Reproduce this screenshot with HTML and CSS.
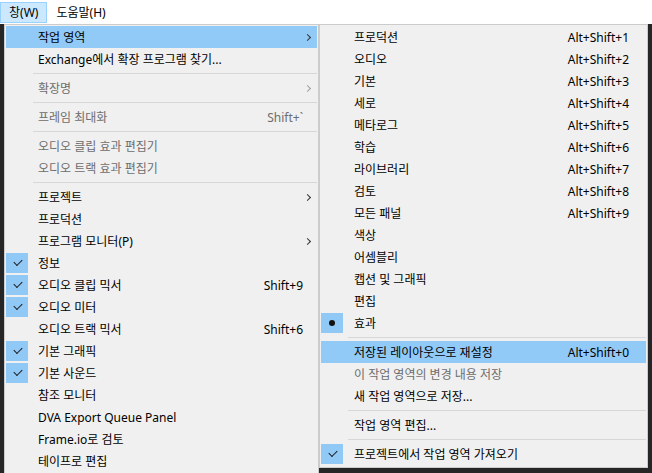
FILE: index.html
```html
<!DOCTYPE html>
<html lang="ko">
  <head>
    <meta charset="UTF-8" />
    <meta name="viewport" content="width=device-width, initial-scale=1.0" />
    <title>창 메뉴</title>
    <link rel="stylesheet" href="styles.css">
  </head>
  <body>
    <div class="menubar">
      <span class="barItem open">창(W)</span>
      <span class="barItem">도움말(H)</span>
    </div>

    <div class="menus">
      <ul class="menu main">
        <li class="item hot"><span class="label">작업 영역</span><span class="arrow"></span></li>
        <li class="item"><span class="label">Exchange에서 확장 프로그램 찾기...</span></li>
        <li class="sep"></li>
        <li class="item off"><span class="label">확장명</span><span class="arrow"></span></li>
        <li class="sep"></li>
        <li class="item off"><span class="label">프레임 최대화</span><span class="key">Shift+`</span></li>
        <li class="sep"></li>
        <li class="item off"><span class="label">오디오 클립 효과 편집기</span></li>
        <li class="item off"><span class="label">오디오 트랙 효과 편집기</span></li>
        <li class="sep"></li>
        <li class="item"><span class="label">프로젝트</span><span class="arrow"></span></li>
        <li class="item"><span class="label">프로덕션</span></li>
        <li class="item"><span class="label">프로그램 모니터(P)</span><span class="arrow"></span></li>
        <li class="item checked"><span class="label">정보</span></li>
        <li class="item checked"><span class="label">오디오 클립 믹서</span><span class="key">Shift+9</span></li>
        <li class="item checked"><span class="label">오디오 미터</span></li>
        <li class="item"><span class="label">오디오 트랙 믹서</span><span class="key">Shift+6</span></li>
        <li class="item checked"><span class="label">기본 그래픽</span></li>
        <li class="item checked"><span class="label">기본 사운드</span></li>
        <li class="item"><span class="label">참조 모니터</span></li>
        <li class="item"><span class="label">DVA Export Queue Panel</span></li>
        <li class="item"><span class="label">Frame.io로 검토</span></li>
        <li class="item"><span class="label">테이프로 편집</span></li>
      </ul>

      <ul class="menu sub">
        <li class="item"><span class="label">프로덕션</span><span class="key">Alt+Shift+1</span></li>
        <li class="item"><span class="label">오디오</span><span class="key">Alt+Shift+2</span></li>
        <li class="item"><span class="label">기본</span><span class="key">Alt+Shift+3</span></li>
        <li class="item"><span class="label">세로</span><span class="key">Alt+Shift+4</span></li>
        <li class="item"><span class="label">메타로그</span><span class="key">Alt+Shift+5</span></li>
        <li class="item"><span class="label">학습</span><span class="key">Alt+Shift+6</span></li>
        <li class="item"><span class="label">라이브러리</span><span class="key">Alt+Shift+7</span></li>
        <li class="item"><span class="label">검토</span><span class="key">Alt+Shift+8</span></li>
        <li class="item"><span class="label">모든 패널</span><span class="key">Alt+Shift+9</span></li>
        <li class="item"><span class="label">색상</span></li>
        <li class="item"><span class="label">어셈블리</span></li>
        <li class="item"><span class="label">캡션 및 그래픽</span></li>
        <li class="item"><span class="label">편집</span></li>
        <li class="item radio"><span class="label">효과</span></li>
        <li class="sep"></li>
        <li class="item hot"><span class="label">저장된 레이아웃으로 재설정</span><span class="key">Alt+Shift+0</span></li>
        <li class="item off"><span class="label">이 작업 영역의 변경 내용 저장</span></li>
        <li class="item"><span class="label">새 작업 영역으로 저장...</span></li>
        <li class="sep"></li>
        <li class="item"><span class="label">작업 영역 편집...</span></li>
        <li class="sep"></li>
        <li class="item checked"><span class="label">프로젝트에서 작업 영역 가져오기</span></li>
      </ul>
    </div>
  </body>
</html>
```

FILE: styles.css
```css
* {
  margin: 0;
  padding: 0;
  box-sizing: border-box;
}
body {
  background-color: #262626;
  font-family: "Segoe UI", "Noto Sans", "Noto Sans CJK KR", sans-serif;
  font-size: 12px;
  color: #000;
  overflow: hidden;
  width: 652px;
  height: 473px;
}
.menubar {
  background-color: #fff;
  height: 24px;
  display: flex;
  align-items: flex-start;
  padding-top: 2px;
}
.barItem {
  height: 21px;
  line-height: 20px;
  padding: 0 8px 0 8px;
  border: 1px solid transparent;
}
.barItem.open {
  background-color: #cce8ff;
  border-color: #99d1ff;
}
.menus {
  display: flex;
  align-items: flex-start;
  padding-left: 4px;
  height: 449px;
  overflow: hidden;
}
.menu {
  list-style: none;
  background-color: #f0f0f0;
  border: 1px solid #cccccc;
  padding: 1px 1px 2px 1px;
}
.main {
  width: 315px;
  height: 449px;
  border-bottom: none;
  padding-bottom: 0;
  overflow: hidden;
}
.sub {
  width: 329px;
}
.item {
  height: 22px;
  line-height: 22px;
  display: flex;
  align-items: center;
  position: relative;
  white-space: nowrap;
}
.main .item {
  padding: 0 0 0 32px;
}
.sub .item {
  padding: 0 0 0 33px;
}
.label,
.key {
  position: relative;
  top: 1px;
}
.label {
  flex: 1;
}
.key {
  text-align: right;
}
.main .key {
  margin-right: 14px;
}
.sub .key {
  margin-right: 17px;
}
.item.hot {
  background-color: #91c9f7;
}
.item.off {
  color: #6d6d6d;
}
.arrow {
  width: 14px;
  height: 22px;
  position: relative;
}
.arrow::after {
  content: "";
  position: absolute;
  left: 2px;
  top: 9px;
  width: 4px;
  height: 4px;
  border-top: 1px solid #333;
  border-right: 1px solid #333;
  transform: rotate(45deg);
}
.off .arrow::after {
  border-color: #a0a0a0;
}
.checked::before,
.radio::before {
  content: "";
  position: absolute;
  left: 0;
  top: 1px;
  width: 22px;
  height: 20px;
  background-color: #90c8f6;
}
.checked::after {
  content: "";
  position: absolute;
  left: 8px;
  top: 7px;
  width: 7px;
  height: 4px;
  border-left: 1.5px solid #1b1b1b;
  border-bottom: 1.5px solid #1b1b1b;
  transform: rotate(-45deg);
}
.radio::after {
  content: "";
  position: absolute;
  left: 8px;
  top: 8px;
  width: 6px;
  height: 6px;
  border-radius: 50%;
  background-color: #111;
}
.sep {
  height: 7px;
  position: relative;
}
.sep::after {
  content: "";
  position: absolute;
  left: 27px;
  right: 0;
  top: 3px;
  height: 1px;
  background-color: #d7d7d7;
}
```
